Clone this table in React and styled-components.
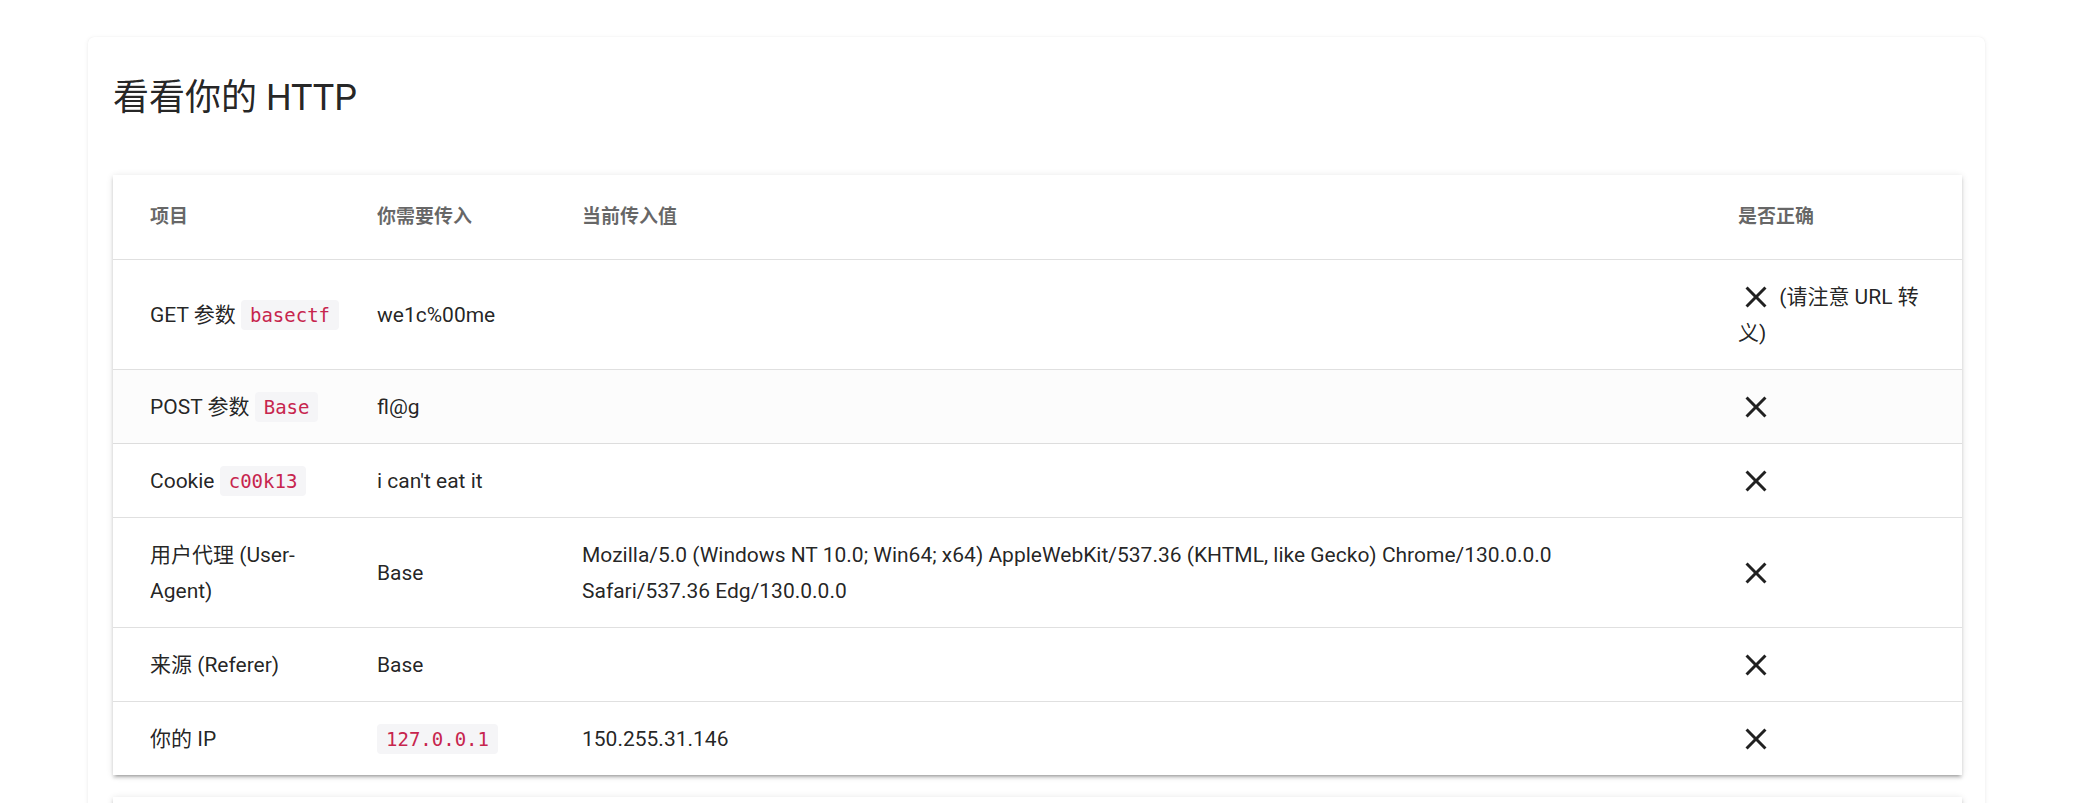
import React from "react";
import styled, { createGlobalStyle } from "styled-components";

const GlobalStyle = createGlobalStyle`
  * { box-sizing: border-box; }
  html, body {
    margin: 0;
    padding: 0;
    background: #ffffff;
  }
  body {
    font-family: Roboto, "Noto Sans CJK SC", sans-serif;
    color: rgba(0, 0, 0, 0.87);
    -webkit-font-smoothing: antialiased;
  }
`;

const Page = styled.main`
  padding: 37px 88px 0;
`;

const Sheet = styled.section`
  background: #fff;
  border-radius: 6px;
  box-shadow: 0 1px 5px rgba(0, 0, 0, 0.07), 0 0 1px rgba(0, 0, 0, 0.08);
  padding: 40px 23px 40px 25px;
`;

const Title = styled.h1`
  margin: 0 0 55px;
  font-size: 36px;
  line-height: 43px;
  font-weight: 400;
  color: rgba(0, 0, 0, 0.87);
`;

const TableCard = styled.div`
  background: #fff;
  min-height: ${(p) => (p.$empty ? "160px" : "0")};
  box-shadow: 0 4px 2px -3px rgba(0, 0, 0, 0.2), 0 3px 3px 0 rgba(0, 0, 0, 0.14),
    0 1px 7px 0 rgba(0, 0, 0, 0.12);
  & + & {
    margin-top: 22px;
  }
`;

const Table = styled.table`
  width: 100%;
  border-collapse: separate;
  border-spacing: 0;
  table-layout: fixed;
`;

const HeadCell = styled.th`
  padding: 24px 16px;
  line-height: 36px;
  text-align: left;
  font-size: 19px;
  font-weight: 700;
  color: rgba(0, 0, 0, 0.6);
  border-bottom: 1px solid rgba(0, 0, 0, 0.12);
  vertical-align: middle;
  &:first-child {
    padding-left: 37px;
  }
  &:nth-child(3) {
    padding-right: 60px;
  }
  &:last-child {
    padding-right: 36px;
  }
`;

const Row = styled.tr`
  background: ${(p) => (p.$hover ? "#fcfcfc" : "#fff")};
  &:last-child td {
    border-bottom: none;
  }
`;

const Cell = styled.td`
  padding: 18.5px 16px;
  line-height: 36px;
  font-size: 21px;
  color: rgba(0, 0, 0, 0.87);
  border-bottom: 1px solid rgba(0, 0, 0, 0.12);
  vertical-align: middle;
  word-wrap: break-word;
  &:first-child {
    padding-left: 37px;
  }
  &:nth-child(3) {
    padding-right: 60px;
  }
  &:last-child {
    padding-right: 36px;
  }
`;

const Code = styled.code`
  font-family: "DejaVu Sans Mono", "Liberation Mono", monospace;
  font-size: 19px;
  line-height: 1;
  color: #c7254e;
  background: #f5f5f7;
  border-radius: 4px;
  padding: 4px 9px;
`;

const Icon = styled.svg`
  display: inline-block;
  width: 36px;
  height: 36px;
  vertical-align: top;
  fill: rgba(0, 0, 0, 0.87);
`;

const CloseIcon = () => (
  <Icon viewBox="0 0 24 24" aria-hidden="true">
    <path d="M19,6.41L17.59,5L12,10.59L6.41,5L5,6.41L10.59,12L5,17.59L6.41,19L12,13.41L17.59,19L19,17.59L13.41,12L19,6.41Z" />
  </Icon>
);

const rows = [
  {
    item: (
      <>
        GET 参数 <Code>basectf</Code>
      </>
    ),
    need: "we1c%00me",
    current: "",
    note: " (请注意 URL 转义)",
  },
  {
    item: (
      <>
        POST 参数 <Code>Base</Code>
      </>
    ),
    need: "fl@g",
    current: "",
    hover: true,
  },
  {
    item: (
      <>
        Cookie <Code>c00k13</Code>
      </>
    ),
    need: "i can't eat it",
    current: "",
  },
  {
    item: "用户代理 (User-Agent)",
    need: "Base",
    current:
      "Mozilla/5.0 (Windows NT 10.0; Win64; x64) AppleWebKit/537.36 (KHTML, like Gecko) Chrome/130.0.0.0 Safari/537.36 Edg/130.0.0.0",
  },
  {
    item: "来源 (Referer)",
    need: "Base",
    current: "",
  },
  {
    item: "你的 IP",
    need: <Code>127.0.0.1</Code>,
    current: "150.255.31.146",
  },
];

export default function App() {
  return (
    <>
      <GlobalStyle />
      <Page>
        <Sheet>
          <Title>看看你的 HTTP</Title>
          <TableCard>
            <Table>
              <colgroup>
                <col style={{ width: "248px" }} />
                <col style={{ width: "205px" }} />
                <col style={{ width: "1156px" }} />
                <col />
              </colgroup>
              <thead>
                <tr>
                  <HeadCell>项目</HeadCell>
                  <HeadCell>你需要传入</HeadCell>
                  <HeadCell>当前传入值</HeadCell>
                  <HeadCell>是否正确</HeadCell>
                </tr>
              </thead>
              <tbody>
                {rows.map((r, i) => (
                  <Row key={i} $hover={r.hover}>
                    <Cell>{r.item}</Cell>
                    <Cell>{r.need}</Cell>
                    <Cell>{r.current}</Cell>
                    <Cell>
                      <CloseIcon />
                      {r.note}
                    </Cell>
                  </Row>
                ))}
              </tbody>
            </Table>
          </TableCard>
          <TableCard $empty />
        </Sheet>
      </Page>
    </>
  );
}
